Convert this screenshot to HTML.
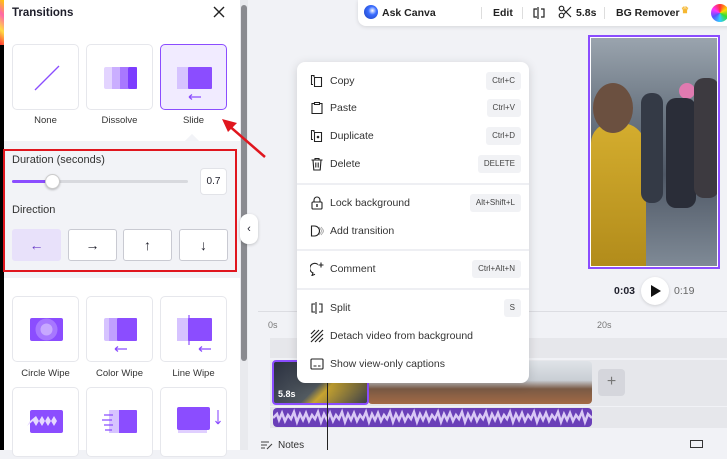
<!DOCTYPE html>
<html><head><meta charset="utf-8"><style>
*{box-sizing:border-box;margin:0;padding:0}
body{width:727px;height:450px;overflow:hidden;background:#f1f2f6;font-family:"Liberation Sans",sans-serif;color:#1e1e2a;position:relative}
.a{position:absolute}
.tile{position:absolute;width:67px;height:66px;background:#fff;border:1px solid #e6e7ec;border-radius:5px}
.lbl{position:absolute;font-size:9.5px;color:#333;text-align:center;width:67px}
.dir{position:absolute;top:229px;width:49px;height:32px;background:#fff;border:1px solid #c9cad2;border-radius:3px;font-size:14px;text-align:center;line-height:30px}
.mi{position:absolute;left:13px;font-size:10.5px;color:#333;height:20px;line-height:20px;width:210px}
.mi .ic{position:absolute;left:0;top:3px;width:14px;height:14px}
.mi .t{position:absolute;left:20px}
.mi .k{position:absolute;right:-1px;top:1px;background:#f1f2f5;border-radius:3px;font-size:8px;padding:0 6px;height:18px;line-height:18px;color:#444}
.dv{position:absolute;left:0;width:232px;height:2px;background:#eeeff3}
</style></head><body>
<div class="a" style="left:0;top:0;width:4px;height:45px;background:linear-gradient(45deg,#f33,#fd4,#f6a,#fc0)"></div>
<div class="a" style="left:0;top:45px;width:4px;height:405px;background:#000"></div>
<div class="a" style="left:4px;top:0;width:236px;height:450px;background:#fff"></div>
<div class="a" style="left:240px;top:0;width:8px;height:450px;background:#e9eaee"></div>
<div class="a" style="left:241px;top:5px;width:6px;height:356px;background:#8a8b90;border-radius:3px"></div>
<div class="a" style="left:12px;top:7px;font-size:11.5px;font-weight:bold">Transitions</div>
<svg class="a" style="left:213px;top:6px" width="12" height="12"><path d="M1 1L11 11M11 1L1 11" stroke="#222" stroke-width="1.4"/></svg>

<div class="tile" style="left:12px;top:44px"><svg width="67" height="66"><path d="M22 45L46 21" stroke="#8b4dff" stroke-width="1.3"/></svg></div>
<div class="tile" style="left:86px;top:44px"><svg width="67" height="66"><rect x="17" y="22" width="33" height="22" rx="2" fill="#e3d4ff"/><rect x="25" y="22" width="25" height="22" fill="#caaeff"/><rect x="33" y="22" width="17" height="22" fill="#a878ff"/><rect x="41" y="22" width="9" height="22" rx="2" fill="#7c3cff"/></svg></div>
<div class="tile" style="left:160px;top:44px;background:#f1ebff;border:1.5px solid #8b4dff"><svg width="67" height="66"><rect x="16" y="22" width="16" height="22" fill="#d6c3ff"/><rect x="27" y="22" width="24" height="22" rx="1" fill="#8b4dff"/><path d="M28 52h12M28 52l3-2.5M28 52l3 2.5" stroke="#8b4dff" stroke-width="1.2" fill="none"/></svg></div>
<div class="lbl" style="left:12px;top:115px">None</div>
<div class="lbl" style="left:86px;top:115px">Dissolve</div>
<div class="lbl" style="left:160px;top:115px">Slide</div>

<div class="a" style="left:4px;top:141px;width:236px;height:137px;background:#f2f3f7"></div>
<div class="a" style="left:187px;top:136px;width:10px;height:10px;background:#f2f3f7;transform:rotate(45deg)"></div>
<div class="a" style="left:3px;top:149px;width:234px;height:123px;border:2px solid #e0161e"></div>
<div class="a" style="left:12px;top:154px;font-size:11px;color:#333">Duration (seconds)</div>
<div class="a" style="left:12px;top:180px;width:176px;height:3px;background:#d8d9de;border-radius:2px"></div>
<div class="a" style="left:12px;top:180px;width:40px;height:3px;background:#8b4dff;border-radius:2px"></div>
<div class="a" style="left:45px;top:174px;width:15px;height:15px;border-radius:50%;background:#fff;border:1px solid #ccc;box-shadow:0 1px 2px rgba(0,0,0,.25)"></div>
<div class="a" style="left:200px;top:168px;width:27px;height:27px;background:#fff;border:1px solid #e2e3e8;border-radius:4px;font-size:10px;text-align:center;line-height:26px">0.7</div>
<div class="a" style="left:12px;top:204px;font-size:11px;color:#333">Direction</div>
<div class="dir" style="left:12px;background:#e8e1fa;border-color:#e8e1fa;color:#6a3dc8">←</div>
<div class="dir" style="left:68px">→</div>
<div class="dir" style="left:123px">↑</div>
<div class="dir" style="left:179px">↓</div>

<div class="tile" style="left:12px;top:296px"><svg width="67" height="66"><rect x="17" y="21" width="33" height="23" rx="2" fill="#8b4dff"/><circle cx="33.5" cy="32.5" r="11" fill="#a777ff"/><circle cx="33.5" cy="32.5" r="6" fill="#c7a8ff"/></svg></div>
<div class="tile" style="left:86px;top:296px"><svg width="67" height="66"><rect x="17" y="21" width="33" height="23" rx="2" fill="#d6c3ff"/><rect x="22" y="21" width="8" height="23" fill="#c0a0ff"/><rect x="30" y="21" width="20" height="23" rx="1" fill="#8b4dff"/><path d="M28 52h12M28 52l3-2.5M28 52l3 2.5" stroke="#8b4dff" stroke-width="1.2" fill="none"/></svg></div>
<div class="tile" style="left:160px;top:296px"><svg width="67" height="66"><rect x="16" y="21" width="16" height="23" fill="#d6c3ff"/><rect x="27" y="21" width="24" height="23" rx="1" fill="#8b4dff"/><path d="M28 18v30" stroke="#8b4dff" stroke-width="1.2"/><path d="M38 52h12M38 52l3-2.5M38 52l3 2.5" stroke="#8b4dff" stroke-width="1.2" fill="none"/></svg></div>
<div class="lbl" style="left:12px;top:368px">Circle Wipe</div>
<div class="lbl" style="left:86px;top:368px">Color Wipe</div>
<div class="lbl" style="left:160px;top:368px">Line Wipe</div>
<div class="tile" style="left:12px;top:387px;height:70px"><svg width="67" height="66"><rect x="17" y="22" width="33" height="23" rx="2" fill="#8b4dff"/><path d="M17 33l6-5 3 5 3-5 3 5 3-5 3 5 3-5 3 5-3 5-3-5-3 5-3-5-3 5-3-5-3 5-3-5-6 5z" fill="#e6d9ff"/></svg></div>
<div class="tile" style="left:86px;top:387px;height:70px"><svg width="67" height="66"><rect x="30" y="22" width="20" height="23" rx="1" fill="#8b4dff"/><rect x="22" y="22" width="10" height="23" fill="#d6c3ff"/><path d="M17 27h9M15 32h10M17 37h9M18 42h7" stroke="#8b4dff" stroke-width="1.2"/></svg></div>
<div class="tile" style="left:160px;top:387px;height:70px"><svg width="67" height="66"><rect x="17" y="25" width="29" height="20" fill="#e0cfff"/><rect x="16" y="19" width="33" height="23" rx="2" fill="#8b4dff"/><path d="M57 22v14M57 36l-2.5-3M57 36l2.5-3" stroke="#8b4dff" stroke-width="1.1" fill="none"/></svg></div>

<div class="a" style="left:240px;top:214px;width:18px;height:30px;background:#fff;border-radius:8px;box-shadow:0 1px 3px rgba(0,0,0,.2);font-size:11px;text-align:center;line-height:30px">‹</div>

<!-- toolbar -->
<div class="a" style="left:358px;top:0;width:380px;height:26px;background:#fff;border-radius:0 0 0 8px;box-shadow:0 1px 4px rgba(0,0,0,.12);font-size:10.5px;font-weight:bold;color:#222">
<div class="a" style="left:6px;top:5px;width:14px;height:14px;border-radius:50%;background:radial-gradient(circle at 60% 40%,#fff 0,#3a6dff 35%,#1d3fb8 100%)"></div>
<div class="a" style="left:24px;top:7px">Ask Canva</div>
<div class="a" style="left:123px;top:7px;width:1px;height:12px;background:#ddd"></div>
<div class="a" style="left:135px;top:7px">Edit</div>
<div class="a" style="left:164px;top:7px;width:1px;height:12px;background:#ddd"></div>
<svg class="a" style="left:174px;top:6px" width="14" height="14"><path d="M6 1v12M5 3H2v8h3M9 3h3v8H9" stroke="#222" stroke-width="1.2" fill="none"/></svg>
<svg class="a" style="left:200px;top:5px" width="14" height="14"><circle cx="3.5" cy="3.5" r="2.3" stroke="#222" fill="none" stroke-width="1.2"/><circle cx="3.5" cy="10.5" r="2.3" stroke="#222" fill="none" stroke-width="1.2"/><path d="M5.5 4.5L13 12M5.5 9.5L13 2" stroke="#222" stroke-width="1.2"/></svg>
<div class="a" style="left:218px;top:7px">5.8s</div>
<div class="a" style="left:246px;top:7px;width:1px;height:12px;background:#ddd"></div>
<div class="a" style="left:258px;top:7px">BG Remover</div>
<div class="a" style="left:323px;top:5px;color:#f5b731;font-size:9px">♛</div>
<div class="a" style="left:356px;top:7px">1x</div>
</div>
<div class="a" style="left:711px;top:4px;width:18px;height:18px;border-radius:50%;background:conic-gradient(#f33,#fd0,#3d3,#3cf,#55f,#f3f,#f33)"></div>

<!-- video -->
<div class="a" style="left:588px;top:35px;width:132px;height:234px;border:2px solid #8b4dff;padding:1px;background:#fff">
<div style="width:100%;height:100%;background:linear-gradient(180deg,#9aa4ae 0%,#6f7a86 30%,#4f5866 60%,#7f8a96 100%);position:relative;overflow:hidden">
<div class="a" style="left:0;top:85px;width:55px;height:150px;background:linear-gradient(#d4ad2e,#b08a1a);border-radius:20px 25px 0 0"></div>
<div class="a" style="left:2px;top:45px;width:40px;height:50px;background:#6b5040;border-radius:50%"></div>
<div class="a" style="left:88px;top:45px;width:16px;height:16px;background:#e07ab0;border-radius:50%"></div>
<div class="a" style="left:75px;top:60px;width:30px;height:110px;background:#2a2d38;border-radius:10px"></div>
<div class="a" style="left:50px;top:55px;width:22px;height:110px;background:#343a46;border-radius:10px"></div>
<div class="a" style="left:103px;top:40px;width:25px;height:120px;background:#3d3a40;border-radius:10px"></div>
</div></div>

<!-- playback -->
<div class="a" style="left:614px;top:285px;font-size:10.5px;font-weight:bold">0:03</div>
<div class="a" style="left:641px;top:277px;width:28px;height:28px;border-radius:50%;background:#fff;box-shadow:0 1px 3px rgba(0,0,0,.15)"></div>
<svg class="a" style="left:650px;top:284px" width="12" height="14"><path d="M1 1L11 7L1 13Z" fill="#111"/></svg>
<div class="a" style="left:674px;top:285px;font-size:10.5px;color:#666">0:19</div>
<div class="a" style="left:258px;top:311px;width:469px;height:1px;background:#dcdde2"></div>
<div class="a" style="left:268px;top:320px;font-size:9px;color:#777">0s</div>
<div class="a" style="left:597px;top:320px;font-size:9px;color:#777">20s</div>
<div class="a" style="left:270px;top:338px;width:457px;height:20px;background:#e6e7eb"></div>
<div class="a" style="left:270px;top:360px;width:457px;height:46px;background:#e6e7eb"></div>
<div class="a" style="left:270px;top:407px;width:457px;height:21px;background:#e6e7eb"></div>
<div class="a" style="left:368px;top:361px;width:224px;height:43px;border-radius:4px;background:linear-gradient(180deg,#dfe3e8 0%,#c9ced4 45%,#7a5a45 65%,#a36a45 100%)"></div>
<div class="a" style="left:272px;top:360px;width:97px;height:45px;border:2px solid #8b4dff;border-radius:4px;background:linear-gradient(135deg,#2a3040,#525a60 50%,#c7a430 60%,#3b3f48)"></div>
<div class="a" style="left:278px;top:389px;font-size:9px;font-weight:bold;color:#fff">5.8s</div>
<div class="a" style="left:598px;top:369px;width:27px;height:27px;border-radius:4px;background:#d5d6dc;font-size:16px;color:#777;text-align:center;line-height:26px">+</div>
<div class="a" style="left:273px;top:408px;width:319px;height:19px;border-radius:4px;background:#6a3fb8;overflow:hidden">
<svg width="319" height="19"><path d="M0 10 L4 6 L6 12 L9 5 L12 13 L15 7 L18 11 L21 4 L24 14 L27 6 L30 12 L33 5 L36 13 L39 7 L42 11 L45 4 L48 14 L51 6 L54 12 L57 5 L60 13 L63 7 L66 11 L69 4 L72 14 L75 6 L78 12 L81 5 L84 13 L87 7 L90 11 L93 4 L96 14 L99 6 L102 12 L105 5 L108 13 L111 7 L114 11 L117 4 L120 14 L123 6 L126 12 L129 5 L132 13 L135 7 L138 11 L141 4 L144 14 L147 6 L150 12 L153 5 L156 13 L159 7 L162 11 L165 4 L168 14 L171 6 L174 12 L177 5 L180 13 L183 7 L186 11 L189 4 L192 14 L195 6 L198 12 L201 5 L204 13 L207 7 L210 11 L213 4 L216 14 L219 6 L222 12 L225 5 L228 13 L231 7 L234 11 L237 4 L240 14 L243 6 L246 12 L249 5 L252 13 L255 7 L258 11 L261 4 L264 14 L267 6 L270 12 L273 5 L276 13 L279 7 L282 11 L285 4 L288 14 L291 6 L294 12 L297 5 L300 13 L303 7 L306 11 L309 4 L312 14 L315 6 L319 10" stroke="#d9c8f5" stroke-width="2.5" fill="none"/></svg></div>
<div class="a" style="left:327px;top:370px;width:1px;height:80px;background:#222"></div>
<svg class="a" style="left:261px;top:440px" width="12" height="10"><path d="M0 2h8M0 5h6M0 8h4M6 9l5-5" stroke="#444" stroke-width="1.1"/></svg>
<div class="a" style="left:278px;top:440px;font-size:10px;color:#333">Notes</div>
<div class="a" style="left:690px;top:440px;width:13px;height:8px;border:1px solid #333"></div>

<!-- menu -->
<div class="a" style="left:297px;top:62px;width:232px;height:321px;background:#fff;border-radius:8px;box-shadow:0 2px 10px rgba(0,0,0,.15)">
<div class="mi" style="top:9px"><svg class="ic" viewBox="0 0 14 14"><path d="M4 3V1.5h-2.5v9H3M4.5 3.5h7v9h-7z" stroke="#222" fill="none" stroke-width="1.1"/></svg><span class="t">Copy</span><span class="k">Ctrl+C</span></div>
<div class="mi" style="top:36px"><svg class="ic" viewBox="0 0 14 14"><path d="M4 2.5H2v10h10v-10H10M4.5 1.5h5v2h-5z" stroke="#222" fill="none" stroke-width="1.1"/></svg><span class="t">Paste</span><span class="k">Ctrl+V</span></div>
<div class="mi" style="top:64px"><svg class="ic" viewBox="0 0 14 14"><path d="M4 3V1.5h-2.5v9H3M4.5 3.5h7v9h-7z" stroke="#222" fill="none" stroke-width="1.1"/><circle cx="8" cy="8" r="1.3" fill="#222"/></svg><span class="t">Duplicate</span><span class="k">Ctrl+D</span></div>
<div class="mi" style="top:92px"><svg class="ic" viewBox="0 0 14 14"><path d="M1.5 3h11M5 3V1.5h4V3M3 3l.8 10h6.4L11 3M5.8 5.5v5M8.2 5.5v5" stroke="#222" fill="none" stroke-width="1.1"/></svg><span class="t">Delete</span><span class="k">DELETE</span></div>
<div class="dv" style="top:121px"></div>
<div class="mi" style="top:131px"><svg class="ic" viewBox="0 0 14 14"><rect x="2" y="6" width="10" height="7" rx="1" stroke="#222" fill="none" stroke-width="1.1"/><path d="M4 6V4a3 3 0 016 0v2" stroke="#222" fill="none" stroke-width="1.1"/><rect x="6.3" y="8" width="1.4" height="3" fill="#222"/></svg><span class="t">Lock background</span><span class="k">Alt+Shift+L</span></div>
<div class="mi" style="top:159px"><svg class="ic" viewBox="0 0 14 14"><path d="M1.5 2h3a5 5 0 010 10h-3z" stroke="#222" fill="none" stroke-width="1.1"/><path d="M9 3l3 4-3 4M11 3l3 4-3 4" stroke="#aaa" fill="none" stroke-width="0.9"/></svg><span class="t">Add transition</span></div>
<div class="dv" style="top:187px"></div>
<div class="mi" style="top:197px"><svg class="ic" viewBox="0 0 14 14"><path d="M8 2.5A5 5 0 103 11l-1 2.5 3-1.3" stroke="#222" fill="none" stroke-width="1.1"/><path d="M11 0.5v5M8.5 3h5" stroke="#222" stroke-width="1.1"/></svg><span class="t">Comment</span><span class="k">Ctrl+Alt+N</span></div>
<div class="dv" style="top:226px"></div>
<div class="mi" style="top:236px"><svg class="ic" viewBox="0 0 14 14"><path d="M6 1v12M5 3H2v8h3M9 3h3v8H9" stroke="#222" stroke-width="1.1" fill="none"/></svg><span class="t">Split</span><span class="k">S</span></div>
<div class="mi" style="top:264px"><svg class="ic" viewBox="0 0 14 14"><path d="M1 5L5 1M1 9L9 1M1 13L13 1M5 13L13 5M9 13L13 9" stroke="#222" stroke-width="1.2"/></svg><span class="t">Detach video from background</span></div>
<div class="mi" style="top:292px"><svg class="ic" viewBox="0 0 14 14"><rect x="1" y="2" width="12" height="10" rx="1" stroke="#222" fill="none" stroke-width="1.1"/><path d="M3.5 9h3M8 9h2.5" stroke="#222" stroke-width="1.1"/></svg><span class="t">Show view-only captions</span></div>
</div>

<!-- arrow -->
<svg class="a" style="left:215px;top:110px" width="60" height="55"><path d="M50 47L12 14" stroke="#e0161e" stroke-width="2.5"/><path d="M7 9L22 13L13 22Z" fill="#e0161e"/></svg>
</body></html>
